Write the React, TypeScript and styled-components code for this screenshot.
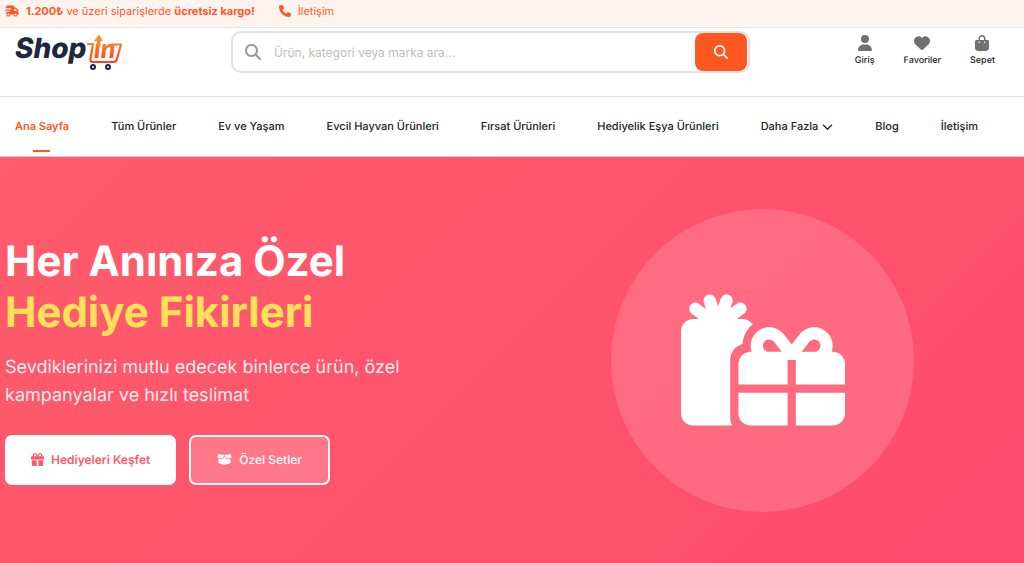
import React from "react";
import styled, { createGlobalStyle } from "styled-components";
import {
  FaTruckFast,
  FaPhone,
  FaMagnifyingGlass,
  FaUser,
  FaHeart,
  FaBagShopping,
  FaChevronDown,
  FaGift,
  FaGifts,
  FaBoxOpen,
} from "react-icons/fa6";

const orange = "#ff5722";

const GlobalStyle = createGlobalStyle`
  *, *::before, *::after { box-sizing: border-box; }
  body {
    margin: 0;
    background: #fff;
    color: #222;
    font-family: Inter, "Liberation Sans", sans-serif;
    font-size: 12px;
    text-rendering: geometricPrecision;
  }
  a { color: inherit; text-decoration: none; }
  button, input { font-family: inherit; }
`;

const TopBar = styled.div`
  display: flex;
  align-items: flex-start;
  gap: 24px;
  height: 28px;
  padding: 3px 5px 0;
  background: #fff3ef;
  border-bottom: 1px solid #e6e6e6;
  color: ${orange};
  font-size: 11px;
  line-height: 16px;
`;

const TopItem = styled.span`
  display: flex;
  align-items: center;
  gap: 7px;
`;

const Header = styled.header`
  display: grid;
  grid-template-columns: 216px minmax(0, 519px) 1fr;
  align-items: start;
  padding: 0 29px 23px 15px;
  border-bottom: 1px solid #e2e2e2;
`;

const LogoLink = styled.a`
  display: block;
  svg { display: block; }
`;

const SearchForm = styled.form`
  display: flex;
  align-items: center;
  height: 42px;
  margin-top: 3px;
  padding-left: 12px;
  border: 2px solid #e2e2e2;
  border-radius: 10px;
  color: #999;
`;

const SearchInput = styled.input`
  flex: 1;
  min-width: 0;
  padding: 0 13px;
  border: 0;
  outline: 0;
  background: none;
  color: #222;
  font-size: 12px;
  &::placeholder { color: #bdbdbd; opacity: 1; }
`;

const SearchButton = styled.button`
  display: flex;
  align-items: center;
  justify-content: center;
  width: 52px;
  height: 38px;
  margin-right: 1px;
  padding: 0;
  border: 0;
  border-radius: 8px;
  background: ${orange};
  color: #fff;
`;

const Actions = styled.div`
  display: flex;
  justify-content: flex-end;
  gap: 29px;
  padding-top: 7px;
`;

const Action = styled.a`
  display: flex;
  flex-direction: column;
  align-items: center;
  gap: 3px;
  font-size: 9px;
  font-weight: 500;
  line-height: 14px;
  svg { color: #707070; }
`;

const Nav = styled.nav`
  display: flex;
  gap: 42px;
  height: 60px;
  padding: 0 15px;
  border-bottom: 1px solid #d8c8c8;
  white-space: nowrap;
`;

const NavLink = styled.a<{ $active?: boolean }>`
  position: relative;
  display: flex;
  align-items: center;
  gap: 4px;
  padding-bottom: 1px;
  font-size: 11px;
  font-weight: ${(p) => (p.$active ? 600 : 500)};
  color: ${(p) => (p.$active ? orange : "#222")};
  &::after {
    content: "";
    display: ${(p) => (p.$active ? "block" : "none")};
    position: absolute;
    bottom: 4px;
    left: calc(50% - 9px);
    width: 17px;
    height: 2px;
    background: ${orange};
  }
`;

const Hero = styled.section`
  display: grid;
  grid-template-columns: 1fr 1fr;
  align-items: center;
  padding: 52px 9px 51px 5px;
  background: linear-gradient(135deg, #ff5c6c 0%, #ff4b6c 100%);
  color: #fff;
`;

const Title = styled.h1`
  margin: 0 0 16px;
  font-size: 42px;
  font-weight: 700;
  line-height: 51px;
`;

const Highlight = styled.span`
  display: block;
  color: #ffe059;
`;

const Lead = styled.p`
  max-width: 420px;
  margin: 0 0 25px;
  font-size: 18px;
  line-height: 28px;
  color: rgba(255, 255, 255, 0.9);
`;

const Buttons = styled.div`
  display: flex;
  gap: 13px;
`;

const HeroButton = styled.a<{ $outline?: boolean }>`
  display: flex;
  align-items: center;
  gap: 7px;
  height: 50px;
  padding: 0 ${(p) => (p.$outline ? 26 : 24)}px 2px;
  border: 2px solid #fff;
  border-radius: 7px;
  background: ${(p) => (p.$outline ? "rgba(255, 255, 255, 0.2)" : "#fff")};
  color: ${(p) => (p.$outline ? "#fff" : "#ff5a6b")};
  font-size: 12px;
  font-weight: ${(p) => (p.$outline ? 500 : 600)};
`;

const Circle = styled.div`
  display: flex;
  align-items: center;
  justify-content: center;
  justify-self: center;
  width: 303px;
  height: 303px;
  padding-bottom: 2px;
  border-radius: 50%;
  background: rgba(255, 255, 255, 0.15);
`;

function Logo() {
  return (
    <svg width="110" height="45" viewBox="0 -5 110 45" role="img" aria-label="Shopin">
      <defs>
        <linearGradient id="cart" gradientUnits="userSpaceOnUse" x1="0" y1="2" x2="0" y2="30">
          <stop offset="0" stopColor="#ff9a26" />
          <stop offset="1" stopColor="#ff3a1f" />
        </linearGradient>
      </defs>
      <text x="0" y="25" fontFamily="Inter, sans-serif" fontSize="28" fontWeight="800" fontStyle="italic" fill="#20263d">
        Shop
      </text>
      <path
        d="M73 11H78L75.500 26Q75 29 78 29H98.500Q101 29 101.800 26.500L106 11.500H97"
        fill="none"
        stroke="url(#cart)"
        strokeWidth="2.200"
        strokeLinejoin="round"
        strokeLinecap="round"
      />
      <text x="79" y="25" fontFamily="Lato, sans-serif" fontSize="27" fontWeight="900" fontStyle="italic" fill="url(#cart)">
        ın
      </text>
      <path d="M78.500 9L84 1.500L88 8Q83 7 78.500 9Z" fill="#ff8a26" />
      <path d="M82.500 6H86L85 13H81.500Z" fill="url(#cart)" />
      <circle cx="78" cy="34" r="2" fill="#fff" stroke="#20263d" strokeWidth="2" />
      <circle cx="93" cy="34" r="2" fill="#fff" stroke="#20263d" strokeWidth="2" />
    </svg>
  );
}

const links = [
  "Tüm Ürünler",
  "Ev ve Yaşam",
  "Evcil Hayvan Ürünleri",
  "Fırsat Ürünleri",
  "Hediyelik Eşya Ürünleri",
];

export default function App() {
  return (
    <>
      <GlobalStyle />
      <TopBar>
        <TopItem>
          <FaTruckFast size={14} />
          <span>
            <strong>1.200₺</strong> ve üzeri siparişlerde <strong>ücretsiz kargo!</strong>
          </span>
        </TopItem>
        <TopItem as="a" href="#iletisim">
          <FaPhone size={12} />
          İletişim
        </TopItem>
      </TopBar>
      <Header>
        <LogoLink href="#">
          <Logo />
        </LogoLink>
        <SearchForm role="search">
          <FaMagnifyingGlass size={16} />
          <SearchInput aria-label="Ara" placeholder="Ürün, kategori veya marka ara..." />
          <SearchButton type="button" aria-label="Ara">
            <FaMagnifyingGlass size={14} />
          </SearchButton>
        </SearchForm>
        <Actions>
          <Action href="#giris">
            <FaUser size={16} />
            Giriş
          </Action>
          <Action href="#favoriler">
            <FaHeart size={16} />
            Favoriler
          </Action>
          <Action href="#sepet">
            <FaBagShopping size={16} />
            Sepet
          </Action>
        </Actions>
      </Header>
      <Nav>
        <NavLink href="#" $active>
          Ana Sayfa
        </NavLink>
        {links.map((label) => (
          <NavLink key={label} href="#">
            {label}
          </NavLink>
        ))}
        <NavLink href="#">
          Daha Fazla
          <FaChevronDown size={11} />
        </NavLink>
        <NavLink href="#">Blog</NavLink>
        <NavLink href="#">İletişim</NavLink>
      </Nav>
      <Hero>
        <div>
          <Title>
            Her Anınıza Özel
            <Highlight>Hediye Fikirleri</Highlight>
          </Title>
          <Lead>Sevdiklerinizi mutlu edecek binlerce ürün, özel kampanyalar ve hızlı teslimat</Lead>
          <Buttons>
            <HeroButton href="#">
              <FaGift size={13} />
              Hediyeleri Keşfet
            </HeroButton>
            <HeroButton href="#" $outline>
              <FaBoxOpen size={15} />
              Özel Setler
            </HeroButton>
          </Buttons>
        </div>
        <Circle>
          <FaGifts size={164} />
        </Circle>
      </Hero>
    </>
  );
}
